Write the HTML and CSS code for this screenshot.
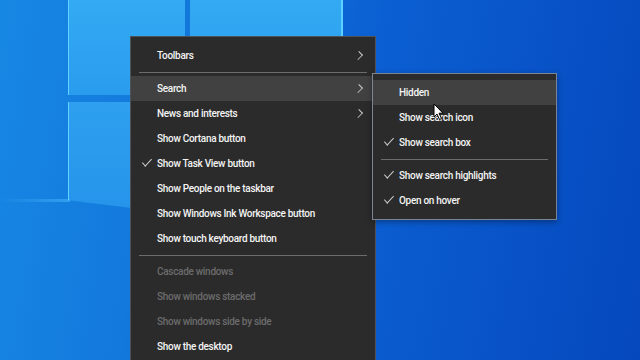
FILE: index.html
```html
<!DOCTYPE html>
<html lang="en">
<head>
  <meta charset="UTF-8">
  <title>Taskbar menu</title>
  <link rel="stylesheet" href="styles.css">
</head>
<body>
  <!-- desktop -->
  <div class="desktop">
    <div class="pane pane-tl"></div>
    <div class="pane pane-tr"></div>
    <div class="pane pane-bl"></div>
    <div class="ray"></div>

    <!-- main context menu -->
    <div class="menu main-menu">
      <div class="item"><span class="label">Toolbars</span><span class="arrow"></span></div>
      <div class="sep"></div>
      <div class="item hover"><span class="label">Search</span><span class="arrow"></span></div>
      <div class="item"><span class="label">News and interests</span><span class="arrow"></span></div>
      <div class="item"><span class="label">Show Cortana button</span></div>
      <div class="item checked"><span class="label">Show Task View button</span></div>
      <div class="item"><span class="label">Show People on the taskbar</span></div>
      <div class="item"><span class="label">Show Windows Ink Workspace button</span></div>
      <div class="item"><span class="label">Show touch keyboard button</span></div>
      <div class="sep"></div>
      <div class="item disabled"><span class="label">Cascade windows</span></div>
      <div class="item disabled"><span class="label">Show windows stacked</span></div>
      <div class="item disabled"><span class="label">Show windows side by side</span></div>
      <div class="item"><span class="label">Show the desktop</span></div>
    </div>

    <!-- search submenu -->
    <div class="menu sub-menu">
      <div class="item hover"><span class="label">Hidden</span></div>
      <div class="item"><span class="label">Show search icon</span></div>
      <div class="item checked"><span class="label">Show search box</span></div>
      <div class="sep"></div>
      <div class="item checked"><span class="label">Show search highlights</span></div>
      <div class="item checked"><span class="label">Open on hover</span></div>
    </div>

    <svg class="cursor" width="12" height="18" viewBox="0 0 12 18">
      <path d="M1 1 L1 14 L4 11 L6.5 16.5 L8.5 15.5 L6 10.2 L10 10.2 Z" fill="#fff" stroke="#000" stroke-width="1" stroke-linejoin="round"/>
    </svg>
  </div>
</body>
</html>
```
FILE: styles.css
```css
body {
  margin: 0;
  font-family: Roboto, "Noto Sans", sans-serif;
}
.desktop {
  width: 640px;
  height: 360px;
  position: relative;
  overflow: hidden;
  background: linear-gradient(100deg, #1787e4 0%, #1379dc 25%, #0b5fd2 55%, #0548bd 100%);
}
/* windows logo panes */
.pane {
  position: absolute;
  background: linear-gradient(180deg, #33aaf3, #2a9cee);
  box-shadow: inset 1px 0 0 #62d2ff;
}
.pane-tl {
  left: 68px;
  top: 0;
  width: 117px;
  height: 95px;
}
.pane-tr {
  left: 190px;
  top: 0;
  width: 153px;
  height: 95px;
  box-shadow: inset -2px 0 0 #5cd0ff;
}
.pane-bl {
  left: 68px;
  top: 102px;
  width: 80px;
  height: 108px;
  clip-path: polygon(0 0, 100% 0, 100% 100%, 0 91%);
  background: linear-gradient(180deg, #2ea0ef, #2594ea);
}
.ray {
  position: absolute;
  left: 0;
  top: 199px;
  width: 70px;
  height: 3px;
  background: linear-gradient(90deg, rgba(80, 190, 255, 0), rgba(80, 190, 255, 0.5));
}
/* menus */
.menu {
  position: absolute;
  background: #2b2b2b;
  color: #f4f4f4;
  font-size: 10px;
  font-weight: 500;
  letter-spacing: -0.3px;
  box-sizing: border-box;
}
.main-menu {
  left: 130px;
  top: 36px;
  width: 246px;
  height: 340px;
  border: 1px solid #4f5358;
  padding-top: 6px;
}
.sub-menu {
  left: 372px;
  top: 73px;
  width: 185px;
  border: 1px solid #7c8594;
  padding: 6px 0 6px;
  box-shadow: 0 2px 6px rgba(0, 0, 0, 0.35);
}
.item {
  height: 25px;
  display: flex;
  align-items: center;
  padding-left: 26px;
  padding-right: 10px;
  position: relative;
}
.item .label {
  flex: 1;
  white-space: nowrap;
}
.item.hover {
  background: #414141;
}
.item.disabled {
  color: #6b6b6b;
}
.item.checked::before {
  content: "";
  position: absolute;
  left: 11px;
  top: 9px;
  width: 9px;
  height: 4px;
  border-left: 1px solid #d0d0d0;
  border-bottom: 1px solid #d0d0d0;
  transform: rotate(-48deg) skewX(-8deg);
  transform-origin: left top;
  margin-top: 3px;
}
.arrow {
  width: 6px;
  height: 6px;
  border-top: 1px solid #cfcfcf;
  border-right: 1px solid #cfcfcf;
  transform: rotate(45deg) scaleX(0.8);
  margin-right: 3px;
}
.sep {
  height: 8px;
  display: flex;
  align-items: center;
  padding: 0 8px;
}
.sep::after {
  content: "";
  flex: 1;
  height: 1px;
  background: #6c6c6c;
}
.cursor {
  position: absolute;
  left: 433px;
  top: 103px;
}
```
